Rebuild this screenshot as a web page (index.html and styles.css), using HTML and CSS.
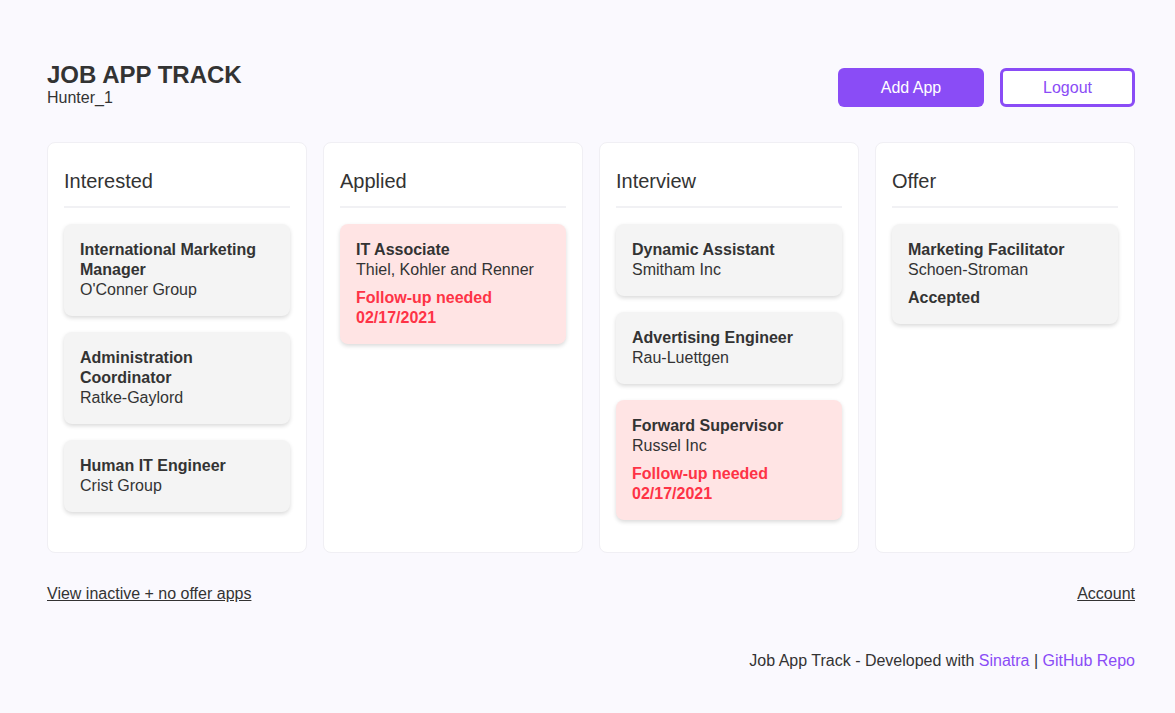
FILE: index.html
```html
<!DOCTYPE html>
<html lang="en">
<head>
    <meta charset="UTF-8">
    <meta name="viewport" content="width=device-width, initial-scale=1.0">
    <title>Job App Track</title>
    <link rel="stylesheet" href="styles.css">
</head>
<body>

<div class="page">
    <div class="header">
        <div class="brand">
            <h1>JOB APP TRACK</h1>
            <div class="username">Hunter_1</div>
        </div>
        <div class="header-buttons">
            <a class="btn btn-primary" href="#">Add App</a>
            <a class="btn btn-outline" href="#">Logout</a>
        </div>
    </div>

    <!-- Board -->
    <div class="board">
        <div class="column">
            <h3>Interested</h3>
            <div class="card">
                <div class="card-title">International Marketing Manager</div>
                <div>O'Conner Group</div>
            </div>
            <div class="card">
                <div class="card-title">Administration Coordinator</div>
                <div>Ratke-Gaylord</div>
            </div>
            <div class="card">
                <div class="card-title">Human IT Engineer</div>
                <div>Crist Group</div>
            </div>
        </div>

        <div class="column">
            <h3>Applied</h3>
            <div class="card card-alert">
                <div class="card-title">IT Associate</div>
                <div>Thiel, Kohler and Renner</div>
                <div class="card-note">Follow-up needed 02/17/2021</div>
            </div>
        </div>

        <div class="column">
            <h3>Interview</h3>
            <div class="card">
                <div class="card-title">Dynamic Assistant</div>
                <div>Smitham Inc</div>
            </div>
            <div class="card">
                <div class="card-title">Advertising Engineer</div>
                <div>Rau-Luettgen</div>
            </div>
            <div class="card card-alert">
                <div class="card-title">Forward Supervisor</div>
                <div>Russel Inc</div>
                <div class="card-note">Follow-up needed 02/17/2021</div>
            </div>
        </div>

        <div class="column">
            <h3>Offer</h3>
            <div class="card">
                <div class="card-title">Marketing Facilitator</div>
                <div>Schoen-Stroman</div>
                <div class="card-status">Accepted</div>
            </div>
        </div>
    </div>

    <div class="board-links">
        <a href="#">View inactive + no offer apps</a>
        <a href="#">Account</a>
    </div>

    <div class="footer">
        Job App Track - Developed with <a href="#">Sinatra</a> | <a href="#">GitHub Repo</a>
    </div>
</div>

</body>
</html>
```

FILE: styles.css
```css
body {
    font-family: 'Liberation Sans', Arial, sans-serif;
    background-color: #faf9fe;
    margin: 0;
    padding: 0;
    color: #333;
    font-size: 16px;
    line-height: 20px;
}
.page {
    margin: 0 40px 0 47px;
    padding-top: 61px;
}
.header {
    display: flex;
    justify-content: space-between;
    align-items: flex-start;
}
.brand h1 {
    font-size: 24px;
    line-height: 28px;
    margin: 0;
    color: #333;
}
.username {
    margin-top: -1px;
}
.header-buttons {
    display: flex;
    gap: 16px;
    margin-top: 7px;
}
.btn {
    display: block;
    box-sizing: border-box;
    height: 39px;
    line-height: 39px;
    text-align: center;
    border-radius: 6px;
    text-decoration: none;
    font-size: 16px;
}
.btn-primary {
    width: 146px;
    background-color: #8a4cf6;
    color: #fff;
}
.btn-outline {
    width: 135px;
    background-color: #fff;
    color: #8a4cf6;
    border: 3px solid #8a4cf6;
    line-height: 33px;
}
.board {
    display: grid;
    grid-template-columns: repeat(4, 1fr);
    gap: 16px;
    margin-top: 34px;
}
.column {
    background-color: #fff;
    border: 1px solid #f0eff4;
    border-radius: 8px;
    padding: 26px 16px 31px;
    min-height: 352px;
}
.column h3 {
    font-size: 20px;
    line-height: 24px;
    font-weight: normal;
    margin: 0 0 16px;
    padding-bottom: 13px;
    border-bottom: 2px solid #f1f1f4;
}
.card {
    background-color: #f4f4f4;
    border-radius: 8px;
    padding: 16px;
    margin-bottom: 16px;
    box-shadow: 0 2px 4px rgba(0, 0, 0, 0.15);
}
.card:last-child {
    margin-bottom: 0;
}
.card-title {
    font-weight: bold;
}
.card-alert {
    background-color: #ffe4e4;
}
.card-note {
    color: #fe3346;
    font-weight: bold;
    margin-top: 8px;
}
.card-status {
    font-weight: bold;
    margin-top: 8px;
}
.board-links {
    display: flex;
    justify-content: space-between;
    margin-top: 31px;
}
.board-links a {
    color: #333;
}
.footer {
    text-align: right;
    margin-top: 47px;
    padding-bottom: 40px;
}
.footer a {
    color: #8a4cf6;
    text-decoration: none;
}
```
